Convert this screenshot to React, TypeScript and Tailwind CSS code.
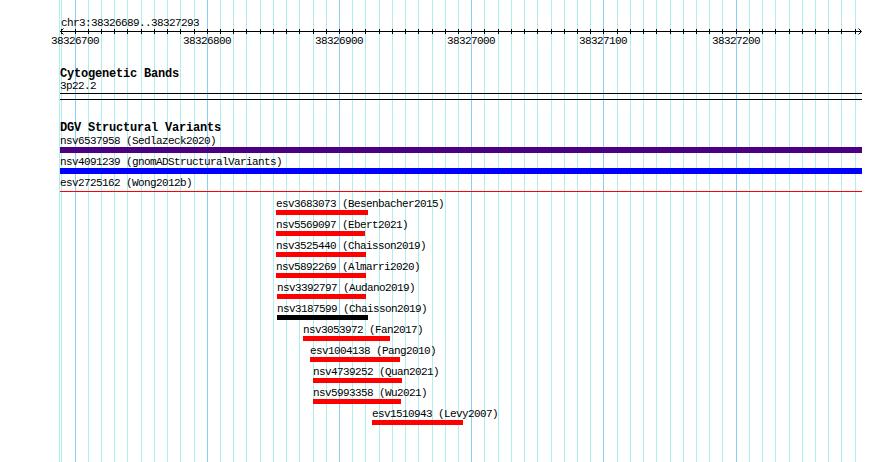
import React from 'react';

// track geometry: 38326689..38327293 drawn over 800px starting at x=60
const TRACK_LEFT = 60;
const TRACK_WIDTH = 802;
const BP_PER_PX = 800 / 605;
const tickX = (k: number) => Math.floor(75 + k * 10 * BP_PER_PX);

const gridLines = Array.from({ length: 61 }, (_, i) => i - 1).map((k) => ({
  x: tickX(k),
  major: k % 10 === 0,
}));

const rulerLabels = [0, 10, 20, 30, 40, 50].map((k) => ({
  x: tickX(k),
  text: String(38326700 + k * 10),
}));

type Variant = {
  id: string;
  study: string;
  x0: number;
  x1: number;
  color: string;
};

const variants: Variant[] = [
  { id: 'esv3683073', study: 'Besenbacher2015', x0: 276, x1: 368, color: '#ff0000' },
  { id: 'nsv5569097', study: 'Ebert2021', x0: 276, x1: 365, color: '#ff0000' },
  { id: 'nsv3525440', study: 'Chaisson2019', x0: 276, x1: 366, color: '#ff0000' },
  { id: 'nsv5892269', study: 'Almarri2020', x0: 276, x1: 366, color: '#ff0000' },
  { id: 'nsv3392797', study: 'Audano2019', x0: 277, x1: 366, color: '#ff0000' },
  { id: 'nsv3187599', study: 'Chaisson2019', x0: 277, x1: 368, color: '#000000' },
  { id: 'nsv3053972', study: 'Fan2017', x0: 303, x1: 390, color: '#ff0000' },
  { id: 'esv1004138', study: 'Pang2010', x0: 310, x1: 400, color: '#ff0000' },
  { id: 'nsv4739252', study: 'Quan2021', x0: 313, x1: 402, color: '#ff0000' },
  { id: 'nsv5993358', study: 'Wu2021', x0: 313, x1: 401, color: '#ff0000' },
  { id: 'esv1510943', study: 'Levy2007', x0: 372, x1: 463, color: '#ff0000' },
];

const Grid: React.FC = () => (
  <svg className="absolute inset-0" width={890} height={462} shapeRendering="crispEdges">
    <line x1={59.5} x2={59.5} y1={0} y2={462} stroke="#afeeee" />
    {gridLines.map((g) => (
      <line
        key={g.x}
        x1={g.x + 0.5}
        x2={g.x + 0.5}
        y1={0}
        y2={462}
        stroke={g.major ? '#87cefa' : '#afeeee'}
      />
    ))}
  </svg>
);

const Ruler: React.FC = () => (
  <svg width={TRACK_WIDTH} height={7} shapeRendering="crispEdges" className="block overflow-visible">
    <line x1={0} x2={801} y1={3.5} y2={3.5} stroke="#000" />
    <polyline points="3.5,0.5 0.5,3.5 3.5,6.5" fill="none" stroke="#000" shapeRendering="auto" />
    <polyline points="798.5,0.5 801.5,3.5 798.5,6.5" fill="none" stroke="#000" shapeRendering="auto" />
    {gridLines.map((g) => (
      <line
        key={g.x}
        x1={g.x - TRACK_LEFT + 0.5}
        x2={g.x - TRACK_LEFT + 0.5}
        y1={1}
        y2={6}
        stroke="#000"
      />
    ))}
  </svg>
);

const Label: React.FC<{ offset?: number; children: React.ReactNode }> = ({ offset = 0, children }) => (
  <div
    className="h-[11px] text-[11px] leading-[10px] tracking-[-0.6px] whitespace-pre text-black"
    style={{ marginLeft: offset }}
  >
    {children}
  </div>
);

export default function App() {
  return (
    <div className="relative w-[890px] h-[462px] overflow-hidden bg-white font-['Liberation_Mono',monospace] text-black">
      <Grid />

      <div className="relative pl-[60px] pt-[18px]">
        <div className="h-[10px] text-[11px] leading-[10px] tracking-[-0.6px] pl-px">chr3:38326689..38327293</div>
        <Ruler />
        <div className="relative h-[10px] text-[11px] leading-[10px] tracking-[-0.6px]">
          {rulerLabels.map((l) => (
            <span key={l.text} className="absolute top-px" style={{ left: l.x - TRACK_LEFT - 24 }}>
              {l.text}
            </span>
          ))}
        </div>

        {/* cytogenetic bands */}
        <div className="mt-[23px] h-[12px] text-[12px] leading-[12px] tracking-[-0.2px] font-bold">Cytogenetic Bands</div>
        <div className="mt-px h-[10px] text-[11px] leading-[10px] tracking-[-0.6px]">3p22.2</div>
        <div className="mt-[2px] h-[7px] w-[802px] border-y border-black" />

        {/* DGV */}
        <div className="mt-[22px] h-[12px] text-[12px] leading-[12px] tracking-[-0.2px] font-bold">DGV Structural Variants</div>
        <div className="mt-[2px]">
          <div className="h-[21px]">
            <Label>nsv6537958 (Sedlazeck2020)</Label>
            <div className="h-[6px] w-[802px] bg-[#4b0082]" />
          </div>
          <div className="h-[21px]">
            <Label>nsv4091239 (gnomADStructuralVariants)</Label>
            <div className="h-[6px] w-[802px] bg-[#0000ff]" />
          </div>
          <div className="h-[21px]">
            <Label>esv2725162 (Wong2012b)</Label>
            <div className="mt-[2px] h-px w-[802px] bg-[#ff0000]" />
          </div>
          {variants.map((v) => (
            <div key={v.id} className="h-[21px]">
              <Label offset={v.x0 - TRACK_LEFT}>
                {v.id} ({v.study})
              </Label>
              <div
                className="h-[5px]"
                style={{ marginLeft: v.x0 - TRACK_LEFT, width: v.x1 - v.x0, backgroundColor: v.color }}
              />
            </div>
          ))}
        </div>
      </div>
    </div>
  );
}
